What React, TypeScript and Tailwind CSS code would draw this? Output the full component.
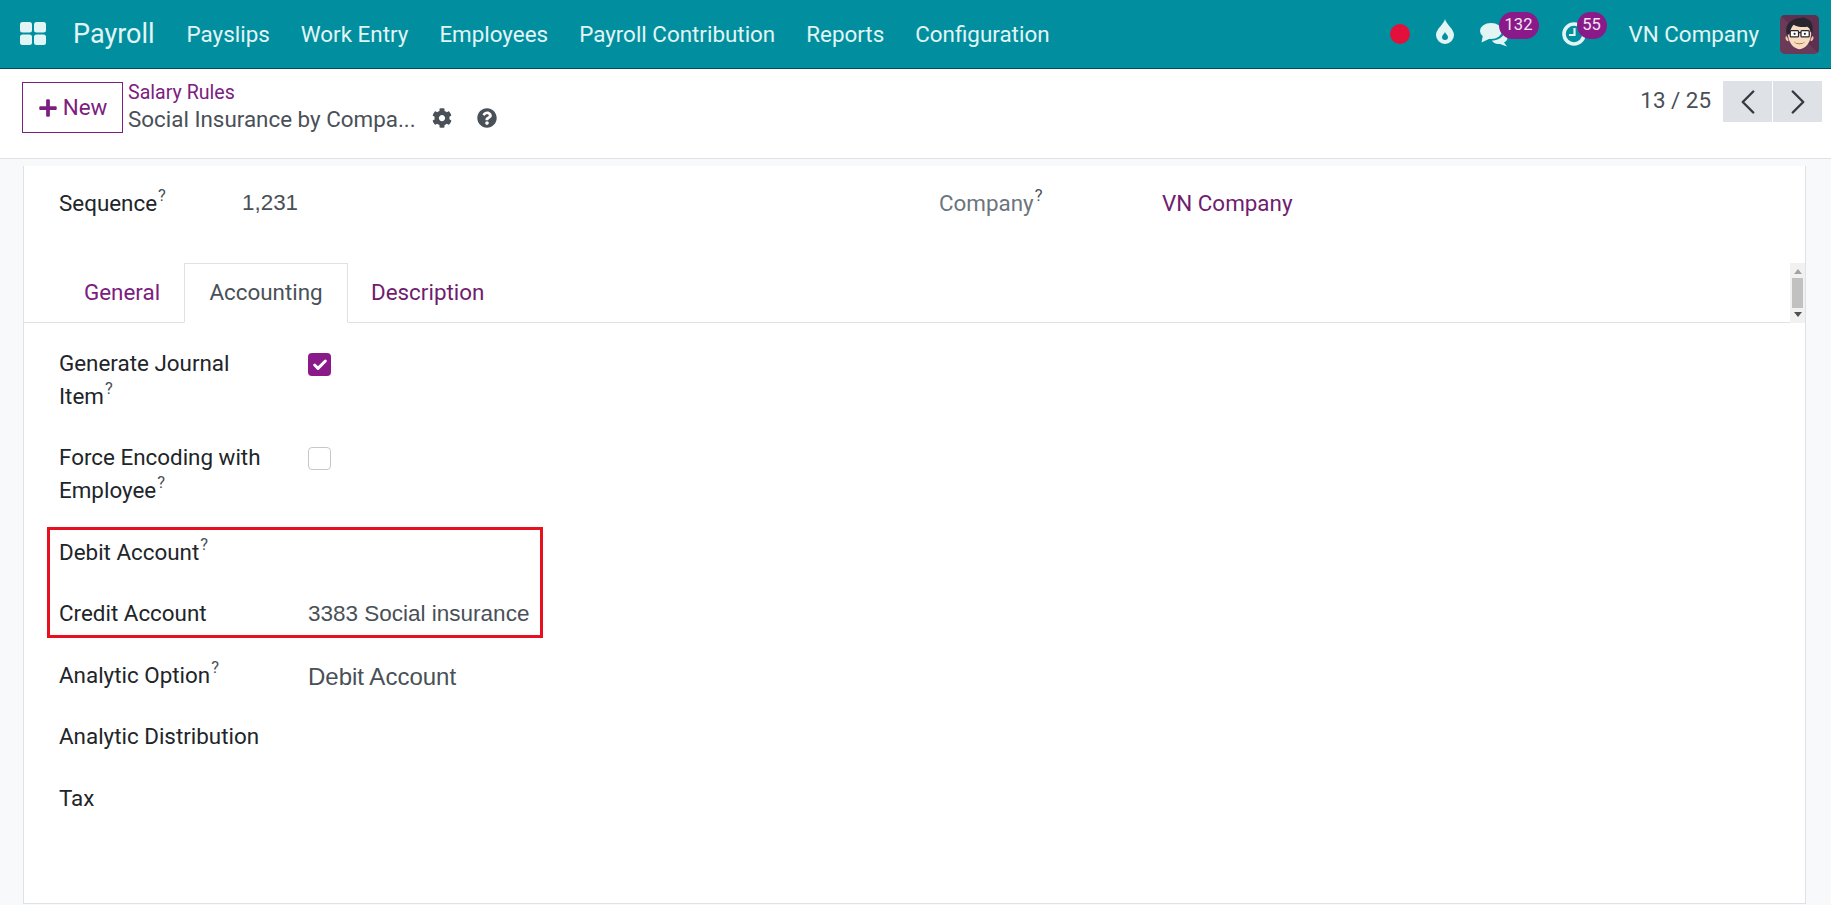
import { Check, ChevronLeft, ChevronRight } from "lucide-react";
import { FaCog, FaPlus, FaQuestionCircle } from "react-icons/fa";

const menu = ["Payslips", "Work Entry", "Employees", "Payroll Contribution", "Reports", "Configuration"];

function Help() {
  return <sup className="text-[16.500px] text-[#495057] ml-[1px] top-[-10px] relative align-baseline font-normal">?</sup>;
}

function Avatar() {
  return (
    <svg viewBox="0 0 40 40" className="w-[39px] h-[39px] rounded-[5px]">
      <rect width="40" height="40" fill="#6b3a58" />
      <path d="M0 0h40v40z" fill="#5d3050" />
      <path d="M7 22c-2-1-2 4 1 5l1-1zM33 22c2-1 2 4-1 5l-1-1z" fill="#f3c9a5" />
      <path d="M8 18c0-8 6-10 12-10s12 2 12 10c0 10-6 17-12 17S8 28 8 18z" fill="#f8dcc0" />
      <path d="M7 20C4 9 13 3 21 3c3-1 6 0 6 1 4 0 8 5 6 15l-2-2c0-2-1-4-3-5-5 1-11 0-14-2-2 2-4 6-4 10z" fill="#2a2630" />
      <rect x="10.500" y="16" width="8.500" height="6.500" rx="1" fill="#fff" stroke="#2a2630" strokeWidth="1.300" />
      <rect x="21.500" y="16" width="8.500" height="6.500" rx="1" fill="#fff" stroke="#2a2630" strokeWidth="1.300" />
      <path d="M19 18h2.500" stroke="#2a2630" strokeWidth="1.300" />
      <circle cx="15" cy="19.300" r="1.100" fill="#2a2630" />
      <circle cx="25.500" cy="19.300" r="1.100" fill="#2a2630" />
      <path d="M14 27c3 3 9 3 12 0-2 4-10 4-12 0z" fill="#a0523d" />
    </svg>
  );
}

function NavIcons() {
  return (
    <div className="flex items-center text-[#e2f5f5]">
      <span className="w-[20px] h-[20px] rounded-full bg-[#e2103a] mr-[26px] mb-[1px]" />
      <svg viewBox="0 0 18 25" className="w-[18px] h-[25px] mr-[26px] mb-[5px]">
        <path d="M9 0c1 5 9 10 9 16a9 9 0 0 1-18 0C0 10 8 5 9 0z" fill="#e2f5f5" />
        <path d="M9 13c.5 2 3 3 3 5a3 3 0 0 1-6 0c0-2 2.500-3 3-5z" fill="#018f9f" />
      </svg>
      <div className="relative w-[28px] h-[24px] mr-[54px] mt-[2px]">
        <svg viewBox="0 0 28 24" className="w-[28px] h-[24px]">
          <ellipse cx="11" cy="8" rx="11" ry="8" fill="#e2f5f5" />
          <path d="M3 12L1.500 19.500 10 15.500z" fill="#e2f5f5" />
          <path d="M12 17.500c5 0 10-2.500 12-6.500 3 2 4 4 3 6-1 1-2 2-3 2.500l3 4-7-2.500c-4 .5-7-1-8-3.500z" fill="#e2f5f5" />
        </svg>
        <span className="absolute left-[19px] top-[-11px] w-[40px] h-[27px] rounded-full bg-[#8a1a8a] text-[#f4e6f4] text-[16.500px] flex items-center justify-center">132</span>
      </div>
      <div className="relative w-[24px] h-[24px] mr-[43px]">
        <svg viewBox="0 0 24 24" className="w-[24px] h-[24px]">
          <circle cx="12" cy="12" r="10" fill="none" stroke="#e2f5f5" strokeWidth="3.600" />
          <path d="M12.500 6v7H7" fill="none" stroke="#e2f5f5" strokeWidth="2.200" />
        </svg>
        <span className="absolute left-[15px] top-[-10px] w-[30px] h-[27px] rounded-full bg-[#8a1a8a] text-[#f4e6f4] text-[16.500px] flex items-center justify-center">55</span>
      </div>
    </div>
  );
}

function Field({ label, help, value, h }: { label: React.ReactNode; help?: boolean; value?: React.ReactNode; h: string }) {
  return (
    <div className={`flex ${h}`}>
      <div className="w-[249px] text-[#212529] leading-[33px]">
        {label}
        {help && <Help />}
      </div>
      {value}
    </div>
  );
}

export default function App() {
  return (
    <div className="w-[1831px] h-[905px] overflow-hidden bg-[#f8f9fa] font-['Roboto',sans-serif] text-[22.4px] flex flex-col">
      {/* navbar */}
      <header className="h-[69px] bg-[#018f9f] border-b border-[#014d55] flex items-center text-[#e2f5f5] pl-[20px] pr-[12px] shrink-0">
        <svg viewBox="0 0 26 23" className="w-[26px] h-[23px] mb-[2px]">
          <rect width="12" height="10.500" rx="2.500" fill="#e2f5f5" />
          <rect x="14" width="12" height="10.500" rx="2.500" fill="#e2f5f5" />
          <rect y="12.500" width="12" height="10.500" rx="2.500" fill="#e2f5f5" />
          <rect x="14" y="12.500" width="12" height="10.500" rx="2.500" fill="#e2f5f5" />
        </svg>
        <span className="text-[27px] ml-[27px] mr-[32px]">Payroll</span>
        <nav className="flex gap-[31px] mt-[1px]">
          {menu.map((m) => (
            <span key={m}>{m}</span>
          ))}
        </nav>
        <div className="ml-auto flex items-center">
          <NavIcons />
          <span className="mr-[21px] mt-[1px]">VN Company</span>
          <Avatar />
        </div>
      </header>

      {/* control panel */}
      <div className="h-[90px] bg-white border-b border-[#dee2e6] flex items-start pl-[22px] pr-[9px] pt-[12px] shrink-0">
        <button className="w-[101px] h-[51px] mt-[1px] border border-[#7c2080] text-[#7c2080] flex items-center justify-center gap-[5px]">
          <FaPlus size={20} />
          New
        </button>
        <div className="ml-[5px]">
          <div className="text-[#7c2080] text-[19.6px] leading-[24px]">Salary Rules</div>
          <div className="flex items-center text-[#495057] leading-[28px]">
            <span className="w-[286px] whitespace-nowrap">Social Insurance by Compa...</span>
            <FaCog size={20} className="ml-[18px] mb-[2px]" />
            <FaQuestionCircle size={20} className="ml-[25px] mb-[2px]" />
          </div>
        </div>
        <div className="ml-auto flex items-center">
          <span className="text-[#495057] mr-[12px] mb-[1px]">13 / 25</span>
          <div className="flex gap-[1px]">
            <span className="w-[49px] h-[41px] bg-[#dee2e6] flex items-center justify-center text-[#343a40]">
              <ChevronLeft size={42} strokeWidth={1.4} />
            </span>
            <span className="w-[49px] h-[41px] bg-[#dee2e6] flex items-center justify-center text-[#343a40]">
              <ChevronRight size={42} strokeWidth={1.4} />
            </span>
          </div>
        </div>
      </div>

      {/* sheet */}
      <main className="relative ml-[23px] mr-[25px] mt-[7px] h-[738px] bg-white border border-t-0 border-[#dee2e6] shrink-0">
        <div className="flex h-[97px] pl-[35px] pt-[20px]">
          <div className="w-[880px] flex">
            <span className="w-[183px] text-[#212529] leading-[34px]">
              Sequence
              <Help />
            </span>
            <span className="font-['Liberation_Sans',sans-serif] text-[#495057] leading-[34px]">1,231</span>
          </div>
          <span className="w-[223px] text-[#6c757d] leading-[34px]">
            Company
            <Help />
          </span>
          <span className="text-[#6f1d6f] leading-[34px]">VN Company</span>
        </div>

        {/* tabs */}
        <div className="relative h-[60px] border-b border-[#dee2e6] flex pl-[35px]">
          <span className="w-[125px] text-[#7c2080] flex items-center pl-[25px]">General</span>
          <span className="w-[164px] h-[60px] border border-b-white border-[#dee2e6] bg-white flex items-center justify-center text-[#495057]">Accounting</span>
          <span className="text-[#6f1d6f] flex items-center pl-[23px]">Description</span>
          <div className="absolute right-0 top-0 w-[15px] h-[60px] bg-[#f1f1f1] flex flex-col items-center justify-between py-[3px]">
            <span className="w-0 h-0 border-x-[4px] border-x-transparent border-b-[5px] border-b-[#a3a3a3] mt-[3px]" />
            <span className="w-[11px] h-[30px] bg-[#c1c1c1]" />
            <span className="w-0 h-0 border-x-[4px] border-x-transparent border-t-[5px] border-t-[#505050] mb-[3px]" />
          </div>
        </div>

        {/* accounting page */}
        <div className="pl-[35px] pt-[24px]">
          <Field
            h="h-[94px]"
            label={<>Generate Journal<br />Item</>}
            help
            value={
              <span className="w-[23px] h-[23px] rounded-[4px] bg-[#8a1a8a] flex items-center justify-center text-white mt-[6px]">
                <Check size={16} strokeWidth={4.5} />
              </span>
            }
          />
          <Field
            h="h-[95px]"
            label={<>Force Encoding with<br />Employee</>}
            help
            value={<span className="w-[23px] h-[23px] rounded-[4px] border border-[#c4c8cc] bg-white mt-[6px]" />}
          />
          <Field h="h-[61px]" label="Debit Account" help />
          <Field
            h="h-[62px]"
            label="Credit Account"
            value={<span className="font-['Liberation_Sans',sans-serif] text-[22.5px] text-[#495057] leading-[33px]">3383 Social insurance</span>}
          />
          <Field
            h="h-[61px]"
            label="Analytic Option"
            help
            value={<span className="font-['Liberation_Sans',sans-serif] text-[#495057] leading-[35px] text-[24px]">Debit Account</span>}
          />
          <Field h="h-[62px]" label="Analytic Distribution" />
          <Field h="h-[61px]" label="Tax" />
        </div>

        {/* annotation */}
        <div className="absolute left-[23px] top-[361px] w-[496px] h-[111px] border-[3px] border-[#e8101f]" />
      </main>
    </div>
  );
}
